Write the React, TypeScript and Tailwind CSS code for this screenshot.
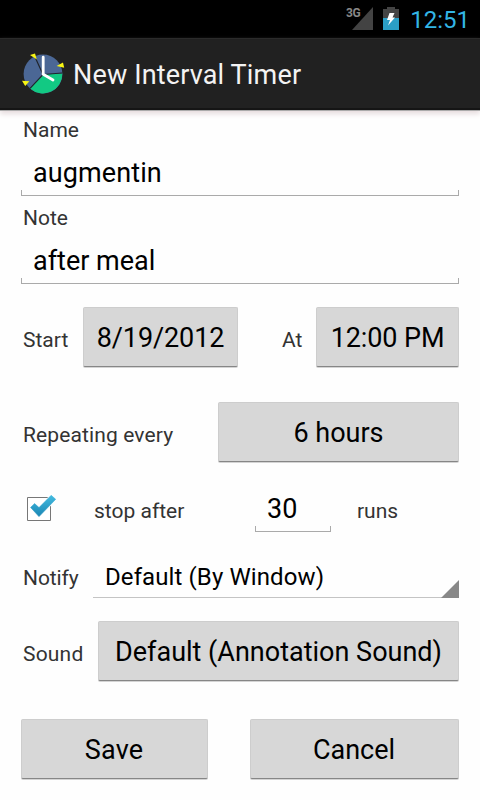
import type { ReactNode } from "react";

function Label({ className = "", children }: { className?: string; children: ReactNode }) {
  return (
    <span className={`block shrink-0 whitespace-nowrap text-[21px] leading-6 text-[#333] ${className}`}>
      {children}
    </span>
  );
}

function Button({ className = "", children }: { className?: string; children: ReactNode }) {
  return (
    <button
      className={`flex h-[60px] shrink-0 items-center justify-center whitespace-nowrap rounded-[2px] border border-[#cdcdcd] border-b-[#868686] bg-[#d7d7d7] pt-[2px] text-[27px] leading-8 text-black shadow-[0_1px_0_#d4d4d4] ${className}`}
    >
      {children}
    </button>
  );
}

function Field({ className = "", children }: { className?: string; children: ReactNode }) {
  return (
    <div className={`flex shrink-0 flex-col ${className}`}>
      <span className="h-[33px] pl-3 text-[27px] leading-8 whitespace-nowrap text-black">{children}</span>
      <span className="h-[6px] border border-t-0 border-[#aaa]" />
    </div>
  );
}

function TimerIcon() {
  return (
    <svg width="44" height="44" viewBox="0 0 44 44" className="mt-[14px] shrink-0">
      <circle cx="22" cy="21" r="19.4" fill="#4b6795" />
      <path d="M22 21.5 41.3 20.5A19.4 19.4 0 0 1 9 35.5Z" fill="#12c983" />
      <path d="M41.2 20 22 21.5 9 35.3M22 21.5 14 4" fill="none" stroke="#20252d" strokeWidth="1.2" />
      <path d="M22.2 4.2V21.2L32 27" fill="none" stroke="#fff" strokeWidth="2.8" strokeLinejoin="round" strokeLinecap="round" />
      <path d="M9 2 14 .4 15.8 6.6ZM35.6 13 42 9.4 43.2 14.8ZM1 27.8 8.4 28.2 4.2 33Z" fill="#f8f514" />
    </svg>
  );
}

function StatusBar() {
  return (
    <div className="flex h-[38px] items-start justify-end bg-black pr-[10px]">
      <span className="mt-[5px] text-[12px] leading-4 font-bold tracking-[-0.4px] text-[#888]">3G</span>
      <svg width="21" height="24" viewBox="0 0 21 24" className="mt-[7px] mr-[10px] -ml-[8px]">
        <path d="M21 0V23H0Z" fill="#434343" />
      </svg>
      <svg width="16" height="24" viewBox="0 0 16 24" className="mt-[7px] mr-[11px]">
        <path d="M4 0H12V2H16V11H0V2H4Z" fill="#444" />
        <path d="M0 11H16V23H0Z" fill="#2b9fc6" />
        <path d="M6.5 6H11.5L9.5 10.5H12L5 18.5 7 13H4Z" fill="#fff" />
      </svg>
      <span className="mt-[6px] text-[24px] leading-7 text-[#33b5e5]">12:51</span>
    </div>
  );
}

export default function App() {
  return (
    <div className="h-[800px] w-[480px] overflow-hidden bg-[#fefefe] font-[Roboto,sans-serif]">
      <StatusBar />
      <header className="flex h-[72px] items-start border-t border-b-2 border-t-[#2b2b2b] border-b-[#151515] bg-[#212121] pl-[21px] shadow-[0_1px_0_#aaa,0_4px_5px_#e6dcde]">
        <TimerIcon />
        <h1 className="mt-[20px] ml-[8px] text-[27px] leading-8 tracking-[0.15px] text-[#f3f3f3]">New Interval Timer</h1>
      </header>
      <main className="flex flex-col pr-[21px] pl-[21px]">
        <Label className="mt-2 ml-[2px]">Name</Label>
        <Field className="mt-[15px] w-[438px] tracking-[0.1px]">augmentin</Field>
        <Label className="mt-[10px] ml-[2px]">Note</Label>
        <Field className="mt-[15px] w-[438px]">after meal</Field>
        <div className="mt-[23px] flex h-[60px] items-center">
          <Label className="w-[60px] pt-[5px] pl-[2px]">Start</Label>
          <Button className="ml-[2px] w-[155px] tracking-[-0.1px]">8/19/2012</Button>
          <Label className="ml-[44px] w-[34px] pt-[5px]">At</Label>
          <Button className="w-[143px] tracking-[-0.1px]">12:00 PM</Button>
        </div>
        <div className="mt-[35px] flex h-[60px] items-center">
          <Label className="w-[197px] pt-[5px] pl-[2px] tracking-[0.12px]">Repeating every</Label>
          <Button className="w-[241px]">6 hours</Button>
        </div>
        <div className="mt-[31px] flex h-[39px] items-start">
          <svg width="30" height="30" viewBox="0 0 30 30" className="mt-[2px] ml-[5px] shrink-0">
            <defs>
              <linearGradient id="tick" x1="0" y1="0" x2="0" y2="1">
                <stop offset="0" stopColor="#43bbe0" />
                <stop offset="1" stopColor="#1a86b4" />
              </linearGradient>
            </defs>
            <path d="M1.5 2.5H24.5V25.5H1.5Z" fill="#fff" stroke="#777" />
            <path d="m4.6 12.4 4-3.8 4.4 4L25.2.3l4.5 4L13 21.6Z" fill="none" stroke="#fff" strokeWidth="2" />
            <path d="m4.6 12.4 4-3.8 4.4 4L25.2.3l4.5 4L13 21.6Z" fill="url(#tick)" stroke="url(#tick)" strokeWidth=".6" strokeLinejoin="round" />
          </svg>
          <Label className="mt-[6px] ml-[38px] w-[161px]">stop after</Label>
          <Field className="w-[76px]">30</Field>
          <Label className="mt-[6px] ml-[26px]">runs</Label>
        </div>
        <div className="mt-[30px] flex h-[36px] items-start">
          <Label className="mt-[4px] w-[72px] pl-[2px] tracking-[-0.1px]">Notify</Label>
          <div className="flex h-[36px] w-[366px] border-b border-[#c4c4c4] pl-3">
            <span className="flex-1 whitespace-nowrap text-[24px] leading-[30px] tracking-[0.1px] text-black">Default (By Window)</span>
            <svg width="18" height="18" viewBox="0 0 18 18" className="mt-[18px]">
              <path d="M18 0V18H0Z" fill="#888" />
            </svg>
          </div>
        </div>
        <div className="mt-[23px] flex h-[60px] items-center">
          <Label className="w-[77px] pt-[5px] pl-[2px] tracking-[0.2px]">Sound</Label>
          <Button className="w-[361px]">Default (Annotation Sound)</Button>
        </div>
        <div className="mt-[38px] flex justify-between">
          <Button className="w-[187px] pr-[1px] tracking-[0.2px]">Save</Button>
          <Button className="w-[209px] pr-[1px]">Cancel</Button>
        </div>
      </main>
    </div>
  );
}
